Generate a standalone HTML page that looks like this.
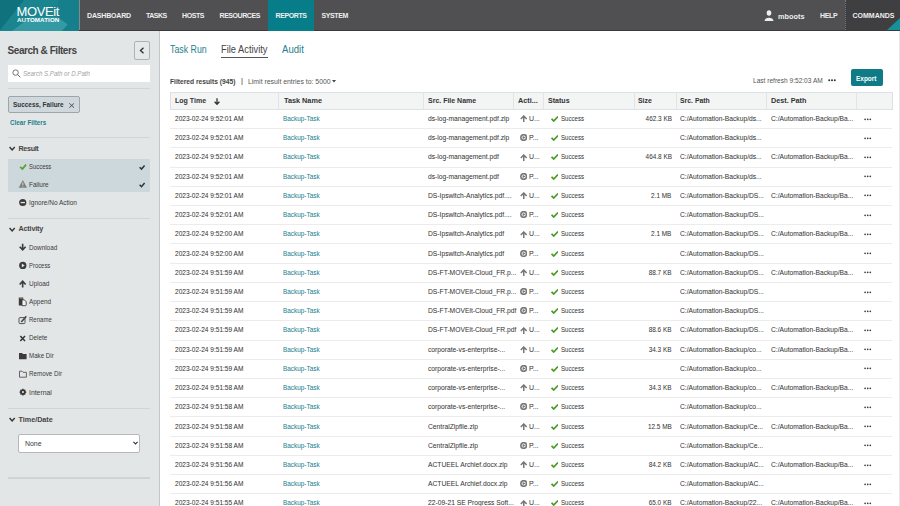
<!DOCTYPE html>
<html><head><meta charset="utf-8">
<style>
*{box-sizing:border-box;}
html,body{margin:0;padding:0;}
body{width:900px;height:506px;overflow:hidden;position:relative;background:#fff;font-family:"Liberation Sans",sans-serif;color:#333;}
.abs{position:absolute;white-space:nowrap;}
/* header */
#hdr{position:absolute;left:0;top:0;width:900px;height:30.6px;background:#505052;border-bottom:1.4px solid #3a3a3c;z-index:5;}
#logo{position:absolute;left:0;top:0;width:79px;height:30.6px;background:#1a858f;overflow:hidden;}
#logo .mv{position:absolute;left:16.5px;top:4.5px;font-size:13px;color:#fff;letter-spacing:-0.4px;line-height:13px;}
#logo .au{position:absolute;left:17px;top:17.2px;font-size:6.2px;font-weight:bold;color:#fff;letter-spacing:0.1px;line-height:6px;}
.nav{position:absolute;top:11.5px;font-size:7px;font-weight:bold;color:#eee;letter-spacing:0px;line-height:8px;}
#rep{position:absolute;left:268px;top:0;width:46px;height:30.6px;background:#077d8a;}
#cmd{position:absolute;left:845px;top:0;width:55px;height:30px;background:#3f3f41;border-left:1px dotted #777;}
/* sidebar */
#side{position:absolute;left:0;top:30px;width:160px;height:476px;background:#e3e6e7;border-right:1.8px solid #c3c7c9;}
.sep{position:absolute;left:8px;width:142px;height:1.4px;background:#cfd4d6;}
.st{position:absolute;font-size:7.7px;color:#3a3a3a;line-height:8px;white-space:nowrap;transform-origin:0 0;}
.sh{position:absolute;font-size:7.2px;font-weight:bold;color:#444;line-height:8px;white-space:nowrap;}
/* main */
.tab{position:absolute;top:43px;font-size:11px;color:#1f7f8c;line-height:12px;white-space:nowrap;transform-origin:0 0;}
#thead{position:absolute;left:170px;top:92px;width:722.5px;height:17.8px;background:#f3f4f4;border:1px solid #dde1e3;}
.th{position:absolute;top:97.3px;font-size:7.8px;font-weight:bold;color:#333;line-height:8px;white-space:nowrap;transform-origin:0 0;}
.vd{position:absolute;top:92px;width:1px;height:17.8px;background:#e1e4e5;}
.row{position:absolute;left:170px;width:722.3px;height:19.22px;border-bottom:1px solid #ececec;}
.row .c{position:absolute;top:5.1px;font-size:8px;-webkit-text-stroke:0.04px currentColor;line-height:8px;white-space:nowrap;transform-origin:0 0;}
.row .t{color:#363636;}
.row .lk{color:#217f8e;}
.row svg{position:absolute;}
.row .ai{left:349.8px;top:5.3px;width:7.5px;height:7px;}
.row .ck{left:380.8px;top:6.1px;width:7.5px;height:6px;}
.row .dots{position:absolute;left:694px;top:7.7px;width:8px;height:3px;}
</style></head><body>
<div id="hdr">
  <div id="logo">
    <svg width="79" height="31" style="position:absolute;left:0;top:0">
      <polygon points="0,0 24,0 0,30" fill="#0f727d"/>
      <polygon points="12,31 30,17.5 58.5,17.5 68,24.5 62,31" fill="#3399a2"/>
      <polygon points="58,0 79,0 79,31 62,31 68,24.5 58.5,17.5" fill="#15808b"/>
    </svg>
    <div class="mv">MOVEit</div>
    <div class="au">AUTOMATION</div>
  </div>
  <div style="position:absolute;left:79px;top:0;width:1px;height:30px;background:#888"></div>
  <div class="nav" style="left:87px;letter-spacing:-0.17px">DASHBOARD</div>
  <div class="nav" style="left:146px;letter-spacing:-0.5px">TASKS</div>
  <div class="nav" style="left:182px;letter-spacing:-0.4px">HOSTS</div>
  <div class="nav" style="left:219.5px;letter-spacing:-0.43px">RESOURCES</div>
  <div id="rep"></div>
  <div class="nav" style="left:275.5px;letter-spacing:-0.4px">REPORTS</div>
  <div class="nav" style="left:321.5px;letter-spacing:-0.4px">SYSTEM</div>
  <svg style="position:absolute;left:764px;top:10px" width="10" height="11" viewBox="0 0 10 11"><ellipse cx="5" cy="3" rx="2.3" ry="2.8" fill="#eee"/><path d="M0.5 11 C0.5 6.5 9.5 6.5 9.5 11Z" fill="#eee"/></svg>
  <div class="nav" style="left:778px;font-size:7.3px;top:12.9px;letter-spacing:0.05px">mboots</div>
  <div class="nav" style="left:820px;letter-spacing:-0.33px">HELP</div>
  <div id="cmd"></div>
  <div class="nav" style="left:852.5px">COMMANDS</div>
  <svg style="position:absolute;left:887px;top:18px" width="13" height="12"><polygon points="13,0 13,12 0,12" fill="#16909b"/></svg>
</div>

<div id="side">
  <div class="abs" style="left:7.6px;top:15.6px;font-size:10px;font-weight:bold;color:#444;letter-spacing:-0.45px;line-height:10px">Search &amp; Filters</div>
  <div class="abs" style="left:134px;top:11.2px;width:15.6px;height:18.4px;border:1.3px solid #aeb2b4;border-radius:2px;background:#e6e9ea"></div>
  <svg class="abs" style="left:139.3px;top:16.5px" width="6" height="7" viewBox="0 0 6 7"><path d="M4.5 0.7 L1.5 3.5 L4.5 6.3" stroke="#333" stroke-width="1.4" fill="none"/></svg>
  <div class="abs" style="left:8px;top:35px;width:142px;height:17px;background:#fff"></div>
  <svg class="abs" style="left:12px;top:39px" width="9" height="9" viewBox="0 0 9 9"><circle cx="3.6" cy="3.6" r="2.7" stroke="#666" stroke-width="0.9" fill="none"/><path d="M5.6 5.6 L8.3 8.3" stroke="#666" stroke-width="1"/></svg>
  <div class="abs" style="left:23.3px;top:40.3px;font-size:7px;font-style:italic;color:#a2a2a2;line-height:8px;transform-origin:0 0;transform:scaleX(0.873)">Search S.Path or D.Path</div>
  <div class="sep" style="top:58px"></div>
  <div class="abs" style="left:8px;top:65.5px;width:72px;height:17.5px;background:#cfd8dc;border:1px solid #9fa6a9;border-radius:2px"></div>
  <div class="abs" style="left:13.2px;top:71.3px;font-size:7.6px;font-weight:bold;color:#333;line-height:8px;transform-origin:0 0;transform:scaleX(0.845)">Success, Failure</div>
  <svg class="abs" style="left:68.8px;top:73.2px" width="5.4" height="5" viewBox="0 0 5.4 5"><path d="M0.3 0.3 L5.1 4.7 M5.1 0.3 L0.3 4.7" stroke="#444" stroke-width="0.9"/></svg>
  <div class="abs" style="left:10px;top:89px;font-size:7.6px;font-weight:bold;color:#1f7f8c;line-height:8px;transform-origin:0 0;transform:scaleX(0.825)">Clear Filters</div>
  <div class="sep" style="top:107px"></div>

  
  <div class="sh" style="left:18.5px;top:114.8px;letter-spacing:-0.34px">Result</div>
  <div class="abs" style="left:8px;top:128.6px;width:142px;height:33.7px;background:#cdd8dc"></div>
  
  <div class="st" style="left:28.8px;top:132.5px;transform:scaleX(0.768)">Success</div>
  
  
  <div class="st" style="left:28.8px;top:150.5px;transform:scaleX(0.836)">Failure</div>
  
  
  <div class="st" style="left:28.8px;top:168.5px;transform:scaleX(0.844)">Ignore/No Action</div>
  <div class="sep" style="top:188px"></div>

  
  <div class="sh" style="left:18.5px;top:195px;letter-spacing:-0.16px">Activity</div>
  <div class="st" style="left:28.8px;top:213.5px;transform:scaleX(0.824)">Download</div>
  <div class="st" style="left:28.8px;top:231.5px;transform:scaleX(0.767)">Process</div>
  <div class="st" style="left:28.8px;top:249.8px;transform:scaleX(0.839)">Upload</div>
  <div class="st" style="left:28.8px;top:268px;transform:scaleX(0.835)">Append</div>
  <div class="st" style="left:28.8px;top:286px;transform:scaleX(0.786)">Rename</div>
  <div class="st" style="left:28.8px;top:304.3px;transform:scaleX(0.824)">Delete</div>
  <div class="st" style="left:28.8px;top:322px;transform:scaleX(0.803)">Make Dir</div>
  <div class="st" style="left:28.8px;top:340.4px;transform:scaleX(0.813)">Remove Dir</div>
  <div class="st" style="left:28.8px;top:358.5px;transform:scaleX(0.8875)">Internal</div>
  <div class="sep" style="top:378px"></div>

  
  <div class="sh" style="left:18.5px;top:386px">Time/Date</div>
  <div class="abs" style="left:17.7px;top:404.3px;width:122px;height:18.6px;background:#fff;border:1px solid #b5b9bb;border-radius:2px"></div>
  <div class="st" style="left:25.3px;top:409.5px;transform:scaleX(0.9)">None</div>
  <svg class="abs" style="left:133px;top:411px" width="5" height="4" viewBox="0 0 5 4"><path d="M0.4 0.8 L2.5 3 L4.6 0.8" stroke="#333" stroke-width="1.1" fill="none"/></svg>
  <div class="sep" style="top:447.3px"></div>
<svg class="abs" style="left:0;top:0" width="160" height="476" viewBox="0 30 160 476">
<path d="M20.2 166.8 L22.4 169 L26 164.6" stroke="#57a02a" stroke-width="1.7" fill="none"/>
<path d="M139.6 167.2 L141.5 169.1 L144.6 165.4" stroke="#333" stroke-width="1.5" fill="none"/>
<path d="M139.6 184.8 L141.5 186.7 L144.6 183" stroke="#333" stroke-width="1.5" fill="none"/>
<path d="M22.85 180 L27 187.7 H18.7Z" fill="#7e7e7e"/><path d="M22.85 182.6 V185" stroke="#e0e4e5" stroke-width="0.9"/><circle cx="22.85" cy="186.1" r="0.55" fill="#e0e4e5"/>
<circle cx="22.75" cy="202.5" r="3.6" fill="#3b3b3b"/><rect x="20.6" y="201.9" width="4.3" height="1.3" fill="#e3e6e7"/>
<path d="M22.65 243.8 V249.6 M19.7 246.7 L22.65 249.8 L25.6 246.7" stroke="#3b3b3b" stroke-width="1.6" fill="none"/>
<circle cx="22.8" cy="265.45" r="3.65" fill="#3b3b3b"/><path d="M21.8 263.5 L24.7 265.45 L21.8 267.4Z" fill="#e3e6e7"/>
<path d="M22.65 287.4 V281.4 M19.7 284.5 L22.65 281.3 L25.6 284.5" stroke="#3b3b3b" stroke-width="1.6" fill="none"/>
<rect x="18.8" y="297.5" width="4.4" height="8" fill="#3b3b3b"/><rect x="19.6" y="297.5" width="2.8" height="1.1" fill="#9a9a9a"/><path d="M22 299.8 H24.3 L26.2 301.8 V304.9 Q26.2 305.7 25.4 305.7 H22Z" fill="#f2f2f2" stroke="#3b3b3b" stroke-width="0.9"/>
<rect x="19" y="317.6" width="6" height="6" rx="1" stroke="#555" stroke-width="1" fill="none"/><path d="M21.3 322 L26.3 316.3" stroke="#444" stroke-width="1.6"/>
<path d="M20.3 335.9 L25 340.9 M25 335.9 L20.3 340.9" stroke="#333" stroke-width="1.5"/>
<path d="M19 353 H22 L23 354 H26.6 V359.3 H19Z" fill="#3b3b3b"/>
<path d="M19.5 371.2 H22 L23 372.3 H26.4 V377.2 H19.5Z" fill="none" stroke="#555" stroke-width="0.9"/>
<polygon points="25.36,391.44 26.28,391.43 26.28,392.77 25.36,392.76 25.11,393.38 25.77,394.02 24.82,394.97 24.18,394.31 23.56,394.56 23.57,395.48 22.23,395.48 22.24,394.56 21.62,394.31 20.98,394.97 20.03,394.02 20.69,393.38 20.44,392.76 19.52,392.77 19.52,391.43 20.44,391.44 20.69,390.82 20.03,390.18 20.98,389.23 21.62,389.89 22.24,389.64 22.23,388.72 23.57,388.72 23.56,389.64 24.18,389.89 24.82,389.23 25.77,390.18 25.11,390.82" fill="#333"/><circle cx="22.9" cy="392.1" r="2.6" fill="#333"/><circle cx="22.9" cy="392.1" r="1.05" fill="#e3e6e7"/>
<path d="M9.6 147 L12.15 149.9 L14.7 147" stroke="#333" stroke-width="1.4" fill="none"/>
<path d="M9.6 228 L12.15 230.9 L14.7 228" stroke="#333" stroke-width="1.4" fill="none"/>
<path d="M9.6 418 L12.15 420.9 L14.7 418" stroke="#333" stroke-width="1.4" fill="none"/>
</svg>
</div>

<!-- main -->
<div class="tab" style="left:169.6px;transform:scaleX(0.8)">Task Run</div>
<div class="tab" style="left:221px;color:#444;transform:scaleX(0.845)">File Activity</div>
<div class="abs" style="left:221px;top:56.5px;width:47px;height:1.6px;background:#555"></div>
<div class="tab" style="left:281.6px;transform:scaleX(0.87)">Audit</div>

<div class="abs" style="left:170px;top:77.5px;font-size:7.6px;font-weight:bold;color:#444;line-height:8px;transform-origin:0 0;transform:scaleX(0.88)">Filtered results (945)</div>
<div class="abs" style="left:241px;top:77.3px;font-size:7.6px;color:#333;line-height:8px">|</div>
<div class="abs" style="left:248.2px;top:77.5px;font-size:7.6px;color:#555;line-height:8px;transform-origin:0 0;transform:scaleX(0.907)">Limit result entries to: 5000</div>
<svg class="abs" style="left:332px;top:80px" width="4" height="3" viewBox="0 0 4 3"><path d="M0 0 H4 L2 2.5Z" fill="#444"/></svg>
<div class="abs" style="left:753px;top:77px;font-size:7.6px;color:#555;line-height:8px;transform-origin:0 0;transform:scaleX(0.865)">Last refresh 9:52:03 AM</div>
<svg class="abs" style="left:828px;top:79px" width="8" height="3"><circle cx="1.2" cy="1.3" r="1" fill="#333"/><circle cx="4" cy="1.3" r="1" fill="#333"/><circle cx="6.8" cy="1.3" r="1" fill="#333"/></svg>
<div class="abs" style="left:851px;top:69.3px;width:32px;height:16.5px;background:#0e7b87;border-radius:2px"></div>
<div class="abs" style="left:855.8px;top:74.7px;font-size:7.8px;font-weight:bold;color:#fff;line-height:8px;transform-origin:0 0;transform:scaleX(0.83)">Export</div>

<div id="thead"></div>
<div class="vd" style="left:278.4px"></div>
<div class="vd" style="left:423px"></div>
<div class="vd" style="left:513.4px"></div>
<div class="vd" style="left:543px"></div>
<div class="vd" style="left:634px"></div>
<div class="vd" style="left:676px"></div>
<div class="vd" style="left:766.3px"></div>
<div class="vd" style="left:856.4px"></div>
<div class="th" style="left:175px;transform:scaleX(0.9)">Log Time</div>
<svg class="abs" style="left:213.7px;top:97.8px" width="6" height="7" viewBox="0 0 6 7"><path d="M3 0.3 V6.2 M0.6 3.8 L3 6.3 L5.4 3.8" stroke="#333" stroke-width="1.3" fill="none"/></svg>
<div class="th" style="left:283.8px;transform:scaleX(0.935)">Task Name</div>
<div class="th" style="left:428.1px;transform:scaleX(0.896)">Src. File Name</div>
<div class="th" style="left:518.2px;transform:scaleX(0.933)">Acti...</div>
<div class="th" style="left:548px;transform:scaleX(0.908)">Status</div>
<div class="th" style="left:638.2px;transform:scaleX(0.887)">Size</div>
<div class="th" style="left:680.3px;transform:scaleX(0.88)">Src. Path</div>
<div class="th" style="left:770.8px;transform:scaleX(0.93)">Dest. Path</div>

<div class="row" style="top:109.90px">
<span class="c t" style="left:5px;transform:scaleX(0.818)">2023-02-24 9:52:01 AM</span>
<span class="c lk" style="left:113px;transform:scaleX(0.799)">Backup-Task</span>
<span class="c t" style="left:258px;transform:scaleX(0.839)">ds-log-management.pdf.zip</span>
<svg class="ai" viewBox="0 0 7.5 7"><path d="M0.8 4 L3.75 1 L6.7 4 M3.75 1.3 V7" stroke="#777" stroke-width="1.5" fill="none"/></svg><span class="c t" style="left:359px;transform:scaleX(0.866)">U...</span>
<svg class="ck" viewBox="0 0 7.5 6"><path d="M0.6 2.8 L2.7 5 L7 0.6" stroke="#4b9a23" stroke-width="1.7" fill="none"/></svg><span class="c t" style="left:391px;transform:scaleX(0.760)">Success</span>
<span class="c t sz" style="right:220.6px;transform:scaleX(0.799);transform-origin:100% 0">462.3 KB</span>
<span class="c t" style="left:510px;transform:scaleX(0.839)">C:/Automation-Backup/ds...</span>
<span class="c t" style="left:601px;transform:scaleX(0.834)">C:/Automation-Backup/Ba...</span>
<svg class="dots" width="8" height="3"><circle cx="1.1" cy="1.3" r="0.85" fill="#3a3a3a"/><circle cx="3.7" cy="1.3" r="0.85" fill="#3a3a3a"/><circle cx="6.3" cy="1.3" r="0.85" fill="#3a3a3a"/></svg>
</div>
<div class="row" style="top:129.12px">
<span class="c t" style="left:5px;transform:scaleX(0.818)">2023-02-24 9:52:01 AM</span>
<span class="c lk" style="left:113px;transform:scaleX(0.799)">Backup-Task</span>
<span class="c t" style="left:258px;transform:scaleX(0.839)">ds-log-management.pdf.zip</span>
<svg class="ai" viewBox="0 0 7.5 7"><circle cx="3.65" cy="3.5" r="2.85" stroke="#777" stroke-width="1.6" fill="none"/><path d="M2.6 1.7 L5.5 3.5 L2.6 5.3Z" fill="#777"/></svg><span class="c t" style="left:359px;transform:scaleX(0.866)">P...</span>
<svg class="ck" viewBox="0 0 7.5 6"><path d="M0.6 2.8 L2.7 5 L7 0.6" stroke="#4b9a23" stroke-width="1.7" fill="none"/></svg><span class="c t" style="left:391px;transform:scaleX(0.760)">Success</span>
<span class="c t sz" style="right:220.6px;transform:scaleX(0.799);transform-origin:100% 0"></span>
<span class="c t" style="left:510px;transform:scaleX(0.839)">C:/Automation-Backup/ds...</span>

<svg class="dots" width="8" height="3"><circle cx="1.1" cy="1.3" r="0.85" fill="#3a3a3a"/><circle cx="3.7" cy="1.3" r="0.85" fill="#3a3a3a"/><circle cx="6.3" cy="1.3" r="0.85" fill="#3a3a3a"/></svg>
</div>
<div class="row" style="top:148.34px">
<span class="c t" style="left:5px;transform:scaleX(0.818)">2023-02-24 9:52:01 AM</span>
<span class="c lk" style="left:113px;transform:scaleX(0.799)">Backup-Task</span>
<span class="c t" style="left:258px;transform:scaleX(0.839)">ds-log-management.pdf</span>
<svg class="ai" viewBox="0 0 7.5 7"><path d="M0.8 4 L3.75 1 L6.7 4 M3.75 1.3 V7" stroke="#777" stroke-width="1.5" fill="none"/></svg><span class="c t" style="left:359px;transform:scaleX(0.866)">U...</span>
<svg class="ck" viewBox="0 0 7.5 6"><path d="M0.6 2.8 L2.7 5 L7 0.6" stroke="#4b9a23" stroke-width="1.7" fill="none"/></svg><span class="c t" style="left:391px;transform:scaleX(0.760)">Success</span>
<span class="c t sz" style="right:220.6px;transform:scaleX(0.799);transform-origin:100% 0">464.8 KB</span>
<span class="c t" style="left:510px;transform:scaleX(0.839)">C:/Automation-Backup/ds...</span>
<span class="c t" style="left:601px;transform:scaleX(0.834)">C:/Automation-Backup/Ba...</span>
<svg class="dots" width="8" height="3"><circle cx="1.1" cy="1.3" r="0.85" fill="#3a3a3a"/><circle cx="3.7" cy="1.3" r="0.85" fill="#3a3a3a"/><circle cx="6.3" cy="1.3" r="0.85" fill="#3a3a3a"/></svg>
</div>
<div class="row" style="top:167.56px">
<span class="c t" style="left:5px;transform:scaleX(0.818)">2023-02-24 9:52:01 AM</span>
<span class="c lk" style="left:113px;transform:scaleX(0.799)">Backup-Task</span>
<span class="c t" style="left:258px;transform:scaleX(0.839)">ds-log-management.pdf</span>
<svg class="ai" viewBox="0 0 7.5 7"><circle cx="3.65" cy="3.5" r="2.85" stroke="#777" stroke-width="1.6" fill="none"/><path d="M2.6 1.7 L5.5 3.5 L2.6 5.3Z" fill="#777"/></svg><span class="c t" style="left:359px;transform:scaleX(0.866)">P...</span>
<svg class="ck" viewBox="0 0 7.5 6"><path d="M0.6 2.8 L2.7 5 L7 0.6" stroke="#4b9a23" stroke-width="1.7" fill="none"/></svg><span class="c t" style="left:391px;transform:scaleX(0.760)">Success</span>
<span class="c t sz" style="right:220.6px;transform:scaleX(0.799);transform-origin:100% 0"></span>
<span class="c t" style="left:510px;transform:scaleX(0.839)">C:/Automation-Backup/ds...</span>

<svg class="dots" width="8" height="3"><circle cx="1.1" cy="1.3" r="0.85" fill="#3a3a3a"/><circle cx="3.7" cy="1.3" r="0.85" fill="#3a3a3a"/><circle cx="6.3" cy="1.3" r="0.85" fill="#3a3a3a"/></svg>
</div>
<div class="row" style="top:186.78px">
<span class="c t" style="left:5px;transform:scaleX(0.818)">2023-02-24 9:52:01 AM</span>
<span class="c lk" style="left:113px;transform:scaleX(0.799)">Backup-Task</span>
<span class="c t" style="left:258px;transform:scaleX(0.839)">DS-Ipswitch-Analytics.pdf....</span>
<svg class="ai" viewBox="0 0 7.5 7"><path d="M0.8 4 L3.75 1 L6.7 4 M3.75 1.3 V7" stroke="#777" stroke-width="1.5" fill="none"/></svg><span class="c t" style="left:359px;transform:scaleX(0.866)">U...</span>
<svg class="ck" viewBox="0 0 7.5 6"><path d="M0.6 2.8 L2.7 5 L7 0.6" stroke="#4b9a23" stroke-width="1.7" fill="none"/></svg><span class="c t" style="left:391px;transform:scaleX(0.760)">Success</span>
<span class="c t sz" style="right:220.6px;transform:scaleX(0.799);transform-origin:100% 0">2.1 MB</span>
<span class="c t" style="left:510px;transform:scaleX(0.839)">C:/Automation-Backup/DS...</span>
<span class="c t" style="left:601px;transform:scaleX(0.834)">C:/Automation-Backup/Ba...</span>
<svg class="dots" width="8" height="3"><circle cx="1.1" cy="1.3" r="0.85" fill="#3a3a3a"/><circle cx="3.7" cy="1.3" r="0.85" fill="#3a3a3a"/><circle cx="6.3" cy="1.3" r="0.85" fill="#3a3a3a"/></svg>
</div>
<div class="row" style="top:206.00px">
<span class="c t" style="left:5px;transform:scaleX(0.818)">2023-02-24 9:52:01 AM</span>
<span class="c lk" style="left:113px;transform:scaleX(0.799)">Backup-Task</span>
<span class="c t" style="left:258px;transform:scaleX(0.839)">DS-Ipswitch-Analytics.pdf....</span>
<svg class="ai" viewBox="0 0 7.5 7"><circle cx="3.65" cy="3.5" r="2.85" stroke="#777" stroke-width="1.6" fill="none"/><path d="M2.6 1.7 L5.5 3.5 L2.6 5.3Z" fill="#777"/></svg><span class="c t" style="left:359px;transform:scaleX(0.866)">P...</span>
<svg class="ck" viewBox="0 0 7.5 6"><path d="M0.6 2.8 L2.7 5 L7 0.6" stroke="#4b9a23" stroke-width="1.7" fill="none"/></svg><span class="c t" style="left:391px;transform:scaleX(0.760)">Success</span>
<span class="c t sz" style="right:220.6px;transform:scaleX(0.799);transform-origin:100% 0"></span>
<span class="c t" style="left:510px;transform:scaleX(0.839)">C:/Automation-Backup/DS...</span>

<svg class="dots" width="8" height="3"><circle cx="1.1" cy="1.3" r="0.85" fill="#3a3a3a"/><circle cx="3.7" cy="1.3" r="0.85" fill="#3a3a3a"/><circle cx="6.3" cy="1.3" r="0.85" fill="#3a3a3a"/></svg>
</div>
<div class="row" style="top:225.22px">
<span class="c t" style="left:5px;transform:scaleX(0.818)">2023-02-24 9:52:00 AM</span>
<span class="c lk" style="left:113px;transform:scaleX(0.799)">Backup-Task</span>
<span class="c t" style="left:258px;transform:scaleX(0.839)">DS-Ipswitch-Analytics.pdf</span>
<svg class="ai" viewBox="0 0 7.5 7"><path d="M0.8 4 L3.75 1 L6.7 4 M3.75 1.3 V7" stroke="#777" stroke-width="1.5" fill="none"/></svg><span class="c t" style="left:359px;transform:scaleX(0.866)">U...</span>
<svg class="ck" viewBox="0 0 7.5 6"><path d="M0.6 2.8 L2.7 5 L7 0.6" stroke="#4b9a23" stroke-width="1.7" fill="none"/></svg><span class="c t" style="left:391px;transform:scaleX(0.760)">Success</span>
<span class="c t sz" style="right:220.6px;transform:scaleX(0.799);transform-origin:100% 0">2.1 MB</span>
<span class="c t" style="left:510px;transform:scaleX(0.839)">C:/Automation-Backup/DS...</span>
<span class="c t" style="left:601px;transform:scaleX(0.834)">C:/Automation-Backup/Ba...</span>
<svg class="dots" width="8" height="3"><circle cx="1.1" cy="1.3" r="0.85" fill="#3a3a3a"/><circle cx="3.7" cy="1.3" r="0.85" fill="#3a3a3a"/><circle cx="6.3" cy="1.3" r="0.85" fill="#3a3a3a"/></svg>
</div>
<div class="row" style="top:244.44px">
<span class="c t" style="left:5px;transform:scaleX(0.818)">2023-02-24 9:52:00 AM</span>
<span class="c lk" style="left:113px;transform:scaleX(0.799)">Backup-Task</span>
<span class="c t" style="left:258px;transform:scaleX(0.839)">DS-Ipswitch-Analytics.pdf</span>
<svg class="ai" viewBox="0 0 7.5 7"><circle cx="3.65" cy="3.5" r="2.85" stroke="#777" stroke-width="1.6" fill="none"/><path d="M2.6 1.7 L5.5 3.5 L2.6 5.3Z" fill="#777"/></svg><span class="c t" style="left:359px;transform:scaleX(0.866)">P...</span>
<svg class="ck" viewBox="0 0 7.5 6"><path d="M0.6 2.8 L2.7 5 L7 0.6" stroke="#4b9a23" stroke-width="1.7" fill="none"/></svg><span class="c t" style="left:391px;transform:scaleX(0.760)">Success</span>
<span class="c t sz" style="right:220.6px;transform:scaleX(0.799);transform-origin:100% 0"></span>
<span class="c t" style="left:510px;transform:scaleX(0.839)">C:/Automation-Backup/DS...</span>

<svg class="dots" width="8" height="3"><circle cx="1.1" cy="1.3" r="0.85" fill="#3a3a3a"/><circle cx="3.7" cy="1.3" r="0.85" fill="#3a3a3a"/><circle cx="6.3" cy="1.3" r="0.85" fill="#3a3a3a"/></svg>
</div>
<div class="row" style="top:263.66px">
<span class="c t" style="left:5px;transform:scaleX(0.818)">2023-02-24 9:51:59 AM</span>
<span class="c lk" style="left:113px;transform:scaleX(0.799)">Backup-Task</span>
<span class="c t" style="left:258px;transform:scaleX(0.839)">DS-FT-MOVEit-Cloud_FR.p...</span>
<svg class="ai" viewBox="0 0 7.5 7"><path d="M0.8 4 L3.75 1 L6.7 4 M3.75 1.3 V7" stroke="#777" stroke-width="1.5" fill="none"/></svg><span class="c t" style="left:359px;transform:scaleX(0.866)">U...</span>
<svg class="ck" viewBox="0 0 7.5 6"><path d="M0.6 2.8 L2.7 5 L7 0.6" stroke="#4b9a23" stroke-width="1.7" fill="none"/></svg><span class="c t" style="left:391px;transform:scaleX(0.760)">Success</span>
<span class="c t sz" style="right:220.6px;transform:scaleX(0.799);transform-origin:100% 0">88.7 KB</span>
<span class="c t" style="left:510px;transform:scaleX(0.839)">C:/Automation-Backup/DS...</span>
<span class="c t" style="left:601px;transform:scaleX(0.834)">C:/Automation-Backup/Ba...</span>
<svg class="dots" width="8" height="3"><circle cx="1.1" cy="1.3" r="0.85" fill="#3a3a3a"/><circle cx="3.7" cy="1.3" r="0.85" fill="#3a3a3a"/><circle cx="6.3" cy="1.3" r="0.85" fill="#3a3a3a"/></svg>
</div>
<div class="row" style="top:282.88px">
<span class="c t" style="left:5px;transform:scaleX(0.818)">2023-02-24 9:51:59 AM</span>
<span class="c lk" style="left:113px;transform:scaleX(0.799)">Backup-Task</span>
<span class="c t" style="left:258px;transform:scaleX(0.839)">DS-FT-MOVEit-Cloud_FR.p...</span>
<svg class="ai" viewBox="0 0 7.5 7"><circle cx="3.65" cy="3.5" r="2.85" stroke="#777" stroke-width="1.6" fill="none"/><path d="M2.6 1.7 L5.5 3.5 L2.6 5.3Z" fill="#777"/></svg><span class="c t" style="left:359px;transform:scaleX(0.866)">P...</span>
<svg class="ck" viewBox="0 0 7.5 6"><path d="M0.6 2.8 L2.7 5 L7 0.6" stroke="#4b9a23" stroke-width="1.7" fill="none"/></svg><span class="c t" style="left:391px;transform:scaleX(0.760)">Success</span>
<span class="c t sz" style="right:220.6px;transform:scaleX(0.799);transform-origin:100% 0"></span>
<span class="c t" style="left:510px;transform:scaleX(0.839)">C:/Automation-Backup/DS...</span>

<svg class="dots" width="8" height="3"><circle cx="1.1" cy="1.3" r="0.85" fill="#3a3a3a"/><circle cx="3.7" cy="1.3" r="0.85" fill="#3a3a3a"/><circle cx="6.3" cy="1.3" r="0.85" fill="#3a3a3a"/></svg>
</div>
<div class="row" style="top:302.10px">
<span class="c t" style="left:5px;transform:scaleX(0.818)">2023-02-24 9:51:59 AM</span>
<span class="c lk" style="left:113px;transform:scaleX(0.799)">Backup-Task</span>
<span class="c t" style="left:258px;transform:scaleX(0.839)">DS-FT-MOVEit-Cloud_FR.pdf</span>
<svg class="ai" viewBox="0 0 7.5 7"><circle cx="3.65" cy="3.5" r="2.85" stroke="#777" stroke-width="1.6" fill="none"/><path d="M2.6 1.7 L5.5 3.5 L2.6 5.3Z" fill="#777"/></svg><span class="c t" style="left:359px;transform:scaleX(0.866)">P...</span>
<svg class="ck" viewBox="0 0 7.5 6"><path d="M0.6 2.8 L2.7 5 L7 0.6" stroke="#4b9a23" stroke-width="1.7" fill="none"/></svg><span class="c t" style="left:391px;transform:scaleX(0.760)">Success</span>
<span class="c t sz" style="right:220.6px;transform:scaleX(0.799);transform-origin:100% 0"></span>
<span class="c t" style="left:510px;transform:scaleX(0.839)">C:/Automation-Backup/DS...</span>

<svg class="dots" width="8" height="3"><circle cx="1.1" cy="1.3" r="0.85" fill="#3a3a3a"/><circle cx="3.7" cy="1.3" r="0.85" fill="#3a3a3a"/><circle cx="6.3" cy="1.3" r="0.85" fill="#3a3a3a"/></svg>
</div>
<div class="row" style="top:321.32px">
<span class="c t" style="left:5px;transform:scaleX(0.818)">2023-02-24 9:51:59 AM</span>
<span class="c lk" style="left:113px;transform:scaleX(0.799)">Backup-Task</span>
<span class="c t" style="left:258px;transform:scaleX(0.839)">DS-FT-MOVEit-Cloud_FR.pdf</span>
<svg class="ai" viewBox="0 0 7.5 7"><path d="M0.8 4 L3.75 1 L6.7 4 M3.75 1.3 V7" stroke="#777" stroke-width="1.5" fill="none"/></svg><span class="c t" style="left:359px;transform:scaleX(0.866)">U...</span>
<svg class="ck" viewBox="0 0 7.5 6"><path d="M0.6 2.8 L2.7 5 L7 0.6" stroke="#4b9a23" stroke-width="1.7" fill="none"/></svg><span class="c t" style="left:391px;transform:scaleX(0.760)">Success</span>
<span class="c t sz" style="right:220.6px;transform:scaleX(0.799);transform-origin:100% 0">88.6 KB</span>
<span class="c t" style="left:510px;transform:scaleX(0.839)">C:/Automation-Backup/DS...</span>
<span class="c t" style="left:601px;transform:scaleX(0.834)">C:/Automation-Backup/Ba...</span>
<svg class="dots" width="8" height="3"><circle cx="1.1" cy="1.3" r="0.85" fill="#3a3a3a"/><circle cx="3.7" cy="1.3" r="0.85" fill="#3a3a3a"/><circle cx="6.3" cy="1.3" r="0.85" fill="#3a3a3a"/></svg>
</div>
<div class="row" style="top:340.54px">
<span class="c t" style="left:5px;transform:scaleX(0.818)">2023-02-24 9:51:59 AM</span>
<span class="c lk" style="left:113px;transform:scaleX(0.799)">Backup-Task</span>
<span class="c t" style="left:258px;transform:scaleX(0.839)">corporate-vs-enterprise-...</span>
<svg class="ai" viewBox="0 0 7.5 7"><path d="M0.8 4 L3.75 1 L6.7 4 M3.75 1.3 V7" stroke="#777" stroke-width="1.5" fill="none"/></svg><span class="c t" style="left:359px;transform:scaleX(0.866)">U...</span>
<svg class="ck" viewBox="0 0 7.5 6"><path d="M0.6 2.8 L2.7 5 L7 0.6" stroke="#4b9a23" stroke-width="1.7" fill="none"/></svg><span class="c t" style="left:391px;transform:scaleX(0.760)">Success</span>
<span class="c t sz" style="right:220.6px;transform:scaleX(0.799);transform-origin:100% 0">34.3 KB</span>
<span class="c t" style="left:510px;transform:scaleX(0.839)">C:/Automation-Backup/co...</span>
<span class="c t" style="left:601px;transform:scaleX(0.834)">C:/Automation-Backup/Ba...</span>
<svg class="dots" width="8" height="3"><circle cx="1.1" cy="1.3" r="0.85" fill="#3a3a3a"/><circle cx="3.7" cy="1.3" r="0.85" fill="#3a3a3a"/><circle cx="6.3" cy="1.3" r="0.85" fill="#3a3a3a"/></svg>
</div>
<div class="row" style="top:359.76px">
<span class="c t" style="left:5px;transform:scaleX(0.818)">2023-02-24 9:51:59 AM</span>
<span class="c lk" style="left:113px;transform:scaleX(0.799)">Backup-Task</span>
<span class="c t" style="left:258px;transform:scaleX(0.839)">corporate-vs-enterprise-...</span>
<svg class="ai" viewBox="0 0 7.5 7"><circle cx="3.65" cy="3.5" r="2.85" stroke="#777" stroke-width="1.6" fill="none"/><path d="M2.6 1.7 L5.5 3.5 L2.6 5.3Z" fill="#777"/></svg><span class="c t" style="left:359px;transform:scaleX(0.866)">P...</span>
<svg class="ck" viewBox="0 0 7.5 6"><path d="M0.6 2.8 L2.7 5 L7 0.6" stroke="#4b9a23" stroke-width="1.7" fill="none"/></svg><span class="c t" style="left:391px;transform:scaleX(0.760)">Success</span>
<span class="c t sz" style="right:220.6px;transform:scaleX(0.799);transform-origin:100% 0"></span>
<span class="c t" style="left:510px;transform:scaleX(0.839)">C:/Automation-Backup/co...</span>

<svg class="dots" width="8" height="3"><circle cx="1.1" cy="1.3" r="0.85" fill="#3a3a3a"/><circle cx="3.7" cy="1.3" r="0.85" fill="#3a3a3a"/><circle cx="6.3" cy="1.3" r="0.85" fill="#3a3a3a"/></svg>
</div>
<div class="row" style="top:378.98px">
<span class="c t" style="left:5px;transform:scaleX(0.818)">2023-02-24 9:51:58 AM</span>
<span class="c lk" style="left:113px;transform:scaleX(0.799)">Backup-Task</span>
<span class="c t" style="left:258px;transform:scaleX(0.839)">corporate-vs-enterprise-...</span>
<svg class="ai" viewBox="0 0 7.5 7"><path d="M0.8 4 L3.75 1 L6.7 4 M3.75 1.3 V7" stroke="#777" stroke-width="1.5" fill="none"/></svg><span class="c t" style="left:359px;transform:scaleX(0.866)">U...</span>
<svg class="ck" viewBox="0 0 7.5 6"><path d="M0.6 2.8 L2.7 5 L7 0.6" stroke="#4b9a23" stroke-width="1.7" fill="none"/></svg><span class="c t" style="left:391px;transform:scaleX(0.760)">Success</span>
<span class="c t sz" style="right:220.6px;transform:scaleX(0.799);transform-origin:100% 0">34.3 KB</span>
<span class="c t" style="left:510px;transform:scaleX(0.839)">C:/Automation-Backup/co...</span>
<span class="c t" style="left:601px;transform:scaleX(0.834)">C:/Automation-Backup/Ba...</span>
<svg class="dots" width="8" height="3"><circle cx="1.1" cy="1.3" r="0.85" fill="#3a3a3a"/><circle cx="3.7" cy="1.3" r="0.85" fill="#3a3a3a"/><circle cx="6.3" cy="1.3" r="0.85" fill="#3a3a3a"/></svg>
</div>
<div class="row" style="top:398.20px">
<span class="c t" style="left:5px;transform:scaleX(0.818)">2023-02-24 9:51:58 AM</span>
<span class="c lk" style="left:113px;transform:scaleX(0.799)">Backup-Task</span>
<span class="c t" style="left:258px;transform:scaleX(0.839)">corporate-vs-enterprise-...</span>
<svg class="ai" viewBox="0 0 7.5 7"><circle cx="3.65" cy="3.5" r="2.85" stroke="#777" stroke-width="1.6" fill="none"/><path d="M2.6 1.7 L5.5 3.5 L2.6 5.3Z" fill="#777"/></svg><span class="c t" style="left:359px;transform:scaleX(0.866)">P...</span>
<svg class="ck" viewBox="0 0 7.5 6"><path d="M0.6 2.8 L2.7 5 L7 0.6" stroke="#4b9a23" stroke-width="1.7" fill="none"/></svg><span class="c t" style="left:391px;transform:scaleX(0.760)">Success</span>
<span class="c t sz" style="right:220.6px;transform:scaleX(0.799);transform-origin:100% 0"></span>
<span class="c t" style="left:510px;transform:scaleX(0.839)">C:/Automation-Backup/co...</span>

<svg class="dots" width="8" height="3"><circle cx="1.1" cy="1.3" r="0.85" fill="#3a3a3a"/><circle cx="3.7" cy="1.3" r="0.85" fill="#3a3a3a"/><circle cx="6.3" cy="1.3" r="0.85" fill="#3a3a3a"/></svg>
</div>
<div class="row" style="top:417.42px">
<span class="c t" style="left:5px;transform:scaleX(0.818)">2023-02-24 9:51:58 AM</span>
<span class="c lk" style="left:113px;transform:scaleX(0.799)">Backup-Task</span>
<span class="c t" style="left:258px;transform:scaleX(0.839)">CentralZipfile.zip</span>
<svg class="ai" viewBox="0 0 7.5 7"><path d="M0.8 4 L3.75 1 L6.7 4 M3.75 1.3 V7" stroke="#777" stroke-width="1.5" fill="none"/></svg><span class="c t" style="left:359px;transform:scaleX(0.866)">U...</span>
<svg class="ck" viewBox="0 0 7.5 6"><path d="M0.6 2.8 L2.7 5 L7 0.6" stroke="#4b9a23" stroke-width="1.7" fill="none"/></svg><span class="c t" style="left:391px;transform:scaleX(0.760)">Success</span>
<span class="c t sz" style="right:220.6px;transform:scaleX(0.799);transform-origin:100% 0">12.5 MB</span>
<span class="c t" style="left:510px;transform:scaleX(0.839)">C:/Automation-Backup/Ce...</span>
<span class="c t" style="left:601px;transform:scaleX(0.834)">C:/Automation-Backup/Ba...</span>
<svg class="dots" width="8" height="3"><circle cx="1.1" cy="1.3" r="0.85" fill="#3a3a3a"/><circle cx="3.7" cy="1.3" r="0.85" fill="#3a3a3a"/><circle cx="6.3" cy="1.3" r="0.85" fill="#3a3a3a"/></svg>
</div>
<div class="row" style="top:436.64px">
<span class="c t" style="left:5px;transform:scaleX(0.818)">2023-02-24 9:51:58 AM</span>
<span class="c lk" style="left:113px;transform:scaleX(0.799)">Backup-Task</span>
<span class="c t" style="left:258px;transform:scaleX(0.839)">CentralZipfile.zip</span>
<svg class="ai" viewBox="0 0 7.5 7"><circle cx="3.65" cy="3.5" r="2.85" stroke="#777" stroke-width="1.6" fill="none"/><path d="M2.6 1.7 L5.5 3.5 L2.6 5.3Z" fill="#777"/></svg><span class="c t" style="left:359px;transform:scaleX(0.866)">P...</span>
<svg class="ck" viewBox="0 0 7.5 6"><path d="M0.6 2.8 L2.7 5 L7 0.6" stroke="#4b9a23" stroke-width="1.7" fill="none"/></svg><span class="c t" style="left:391px;transform:scaleX(0.760)">Success</span>
<span class="c t sz" style="right:220.6px;transform:scaleX(0.799);transform-origin:100% 0"></span>
<span class="c t" style="left:510px;transform:scaleX(0.839)">C:/Automation-Backup/Ce...</span>

<svg class="dots" width="8" height="3"><circle cx="1.1" cy="1.3" r="0.85" fill="#3a3a3a"/><circle cx="3.7" cy="1.3" r="0.85" fill="#3a3a3a"/><circle cx="6.3" cy="1.3" r="0.85" fill="#3a3a3a"/></svg>
</div>
<div class="row" style="top:455.86px">
<span class="c t" style="left:5px;transform:scaleX(0.818)">2023-02-24 9:51:56 AM</span>
<span class="c lk" style="left:113px;transform:scaleX(0.799)">Backup-Task</span>
<span class="c t" style="left:258px;transform:scaleX(0.839)">ACTUEEL Archief.docx.zip</span>
<svg class="ai" viewBox="0 0 7.5 7"><path d="M0.8 4 L3.75 1 L6.7 4 M3.75 1.3 V7" stroke="#777" stroke-width="1.5" fill="none"/></svg><span class="c t" style="left:359px;transform:scaleX(0.866)">U...</span>
<svg class="ck" viewBox="0 0 7.5 6"><path d="M0.6 2.8 L2.7 5 L7 0.6" stroke="#4b9a23" stroke-width="1.7" fill="none"/></svg><span class="c t" style="left:391px;transform:scaleX(0.760)">Success</span>
<span class="c t sz" style="right:220.6px;transform:scaleX(0.799);transform-origin:100% 0">84.2 KB</span>
<span class="c t" style="left:510px;transform:scaleX(0.839)">C:/Automation-Backup/AC...</span>
<span class="c t" style="left:601px;transform:scaleX(0.834)">C:/Automation-Backup/Ba...</span>
<svg class="dots" width="8" height="3"><circle cx="1.1" cy="1.3" r="0.85" fill="#3a3a3a"/><circle cx="3.7" cy="1.3" r="0.85" fill="#3a3a3a"/><circle cx="6.3" cy="1.3" r="0.85" fill="#3a3a3a"/></svg>
</div>
<div class="row" style="top:475.08px">
<span class="c t" style="left:5px;transform:scaleX(0.818)">2023-02-24 9:51:56 AM</span>
<span class="c lk" style="left:113px;transform:scaleX(0.799)">Backup-Task</span>
<span class="c t" style="left:258px;transform:scaleX(0.839)">ACTUEEL Archief.docx.zip</span>
<svg class="ai" viewBox="0 0 7.5 7"><circle cx="3.65" cy="3.5" r="2.85" stroke="#777" stroke-width="1.6" fill="none"/><path d="M2.6 1.7 L5.5 3.5 L2.6 5.3Z" fill="#777"/></svg><span class="c t" style="left:359px;transform:scaleX(0.866)">P...</span>
<svg class="ck" viewBox="0 0 7.5 6"><path d="M0.6 2.8 L2.7 5 L7 0.6" stroke="#4b9a23" stroke-width="1.7" fill="none"/></svg><span class="c t" style="left:391px;transform:scaleX(0.760)">Success</span>
<span class="c t sz" style="right:220.6px;transform:scaleX(0.799);transform-origin:100% 0"></span>
<span class="c t" style="left:510px;transform:scaleX(0.839)">C:/Automation-Backup/AC...</span>

<svg class="dots" width="8" height="3"><circle cx="1.1" cy="1.3" r="0.85" fill="#3a3a3a"/><circle cx="3.7" cy="1.3" r="0.85" fill="#3a3a3a"/><circle cx="6.3" cy="1.3" r="0.85" fill="#3a3a3a"/></svg>
</div>
<div class="row" style="top:494.30px">
<span class="c t" style="left:5px;transform:scaleX(0.818)">2023-02-24 9:51:55 AM</span>
<span class="c lk" style="left:113px;transform:scaleX(0.799)">Backup-Task</span>
<span class="c t" style="left:258px;transform:scaleX(0.839)">22-09-21 SE Progress Soft...</span>
<svg class="ai" viewBox="0 0 7.5 7"><path d="M0.8 4 L3.75 1 L6.7 4 M3.75 1.3 V7" stroke="#777" stroke-width="1.5" fill="none"/></svg><span class="c t" style="left:359px;transform:scaleX(0.866)">U...</span>
<svg class="ck" viewBox="0 0 7.5 6"><path d="M0.6 2.8 L2.7 5 L7 0.6" stroke="#4b9a23" stroke-width="1.7" fill="none"/></svg><span class="c t" style="left:391px;transform:scaleX(0.760)">Success</span>
<span class="c t sz" style="right:220.6px;transform:scaleX(0.799);transform-origin:100% 0">65.0 KB</span>
<span class="c t" style="left:510px;transform:scaleX(0.839)">C:/Automation-Backup/22...</span>
<span class="c t" style="left:601px;transform:scaleX(0.834)">C:/Automation-Backup/Ba...</span>
<svg class="dots" width="8" height="3"><circle cx="1.1" cy="1.3" r="0.85" fill="#3a3a3a"/><circle cx="3.7" cy="1.3" r="0.85" fill="#3a3a3a"/><circle cx="6.3" cy="1.3" r="0.85" fill="#3a3a3a"/></svg>
</div>
<div class="abs" style="left:898.5px;top:31px;width:1px;height:475px;background:#e6e6e6"></div>
</body></html>
